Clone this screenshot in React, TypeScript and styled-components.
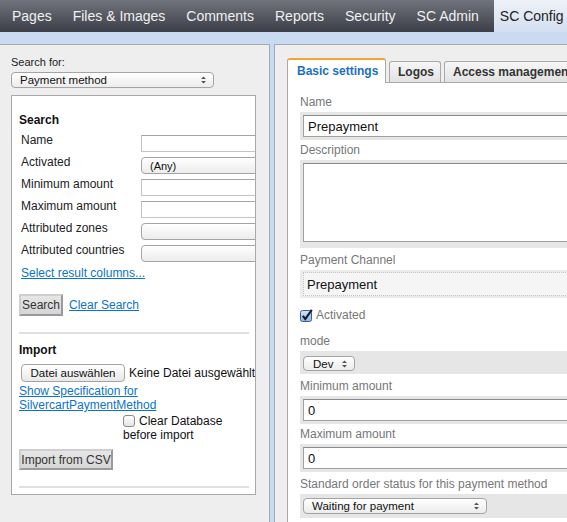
import React from "react";
import styled, { createGlobalStyle } from "styled-components";

const Global = createGlobalStyle`
  html, body { margin: 0; padding: 0; }
  body {
    font-family: "Liberation Sans", Arial, sans-serif;
    background: #c9dbf1;
    color: #222;
  }
  * { box-sizing: border-box; }
`;

const Page = styled.div`
  width: 567px;
  height: 522px;
  overflow: hidden;
  display: flex;
  flex-direction: column;
  background: #c9dbf1;
`;

const TopNav = styled.nav`
  height: 32px;
  flex: none;
  display: flex;
  align-items: stretch;
  gap: 9px;
  padding-left: 6px;
  background: linear-gradient(#72747d, #3b3e47);
`;

const NavTab = styled.div<{ $active?: boolean }>`
  display: flex;
  align-items: center;
  padding: 0 6px 1px;
  font-size: 14px;
  white-space: nowrap;
  color: ${(p) => (p.$active ? "#222" : "#f0f0f0")};
  background: ${(p) =>
    p.$active ? "linear-gradient(#eef2f7, #d2dff0)" : "transparent"};
`;

const Workspace = styled.div`
  flex: 1;
  min-height: 0;
  display: flex;
  gap: 4px;
  padding-top: 12px;
`;

const LeftPanel = styled.aside`
  width: 270px;
  flex: none;
  background: #eeeeee;
  border-top: 1px solid #a9a9a9;
  border-right: 1px solid #9fa8b4;
  padding: 11px 0 0 11px;
`;

const SmallLabel = styled.div`
  font-size: 11px;
  line-height: 13px;
  color: #222;
`;

const MacSelect = styled.div<{ $w: number; $h?: number; $pl?: number }>`
  width: ${(p) => p.$w}px;
  height: ${(p) => p.$h ?? 16}px;
  flex: none;
  display: flex;
  align-items: center;
  justify-content: space-between;
  padding: 0 7px 0 ${(p) => p.$pl ?? 8}px;
  border: 1px solid #a4a4a4;
  border-radius: 4px;
  background: linear-gradient(#ffffff, #ececec);
  font-size: 11.5px;
  color: #111;
  white-space: nowrap;
  overflow: hidden;
`;

const SearchFor = styled(MacSelect)`
  margin-top: 3px;
`;

const Box = styled.section`
  margin-top: 7px;
  width: 245px;
  background: #fff;
  border: 1px solid #a9a9a9;
  padding: 17px 6px 6px 7px;
  overflow: hidden;
`;

const BoxHeading = styled.h3<{ $mt?: number }>`
  margin: ${(p) => p.$mt ?? 0}px 0 4px;
  font-size: 12px;
  line-height: 14px;
  font-weight: bold;
  color: #111;
`;

const FieldRow = styled.div`
  display: flex;
  align-items: flex-start;
  height: 22px;
`;

const RowLabel = styled.label`
  width: 122px;
  flex: none;
  padding-left: 2px;
  font-size: 12px;
  line-height: 18px;
  color: #222;
`;

const TextInput = styled.div`
  width: 150px;
  height: 17px;
  flex: none;
  margin-top: 4px;
  border: 1px solid #c4c4c4;
  border-top-color: #a4a4a4;
  background: #fff;
`;

const RowSelect = styled(MacSelect)`
  margin-top: 4px;
  height: 17px;
  width: 150px;
  font-size: 11px;
  justify-content: flex-start;
`;

const Link = styled.a<{ $block?: boolean; $ml?: number }>`
  display: ${(p) => (p.$block ? "block" : "inline")};
  margin-left: ${(p) => p.$ml ?? 0}px;
  font-size: 12px;
  line-height: 14px;
  color: #0a74c9;
  text-decoration: underline;
  cursor: pointer;
`;

const ResultLink = styled(Link)`
  margin-top: 3px;
`;

const SpecLink = styled(Link)`
  margin-top: 2px;
`;

const ActionRow = styled.div<{ $mt: number }>`
  display: flex;
  align-items: center;
  gap: 6px;
  margin-top: ${(p) => p.$mt}px;
`;

const PlainButton = styled.button<{ $w: number; $h: number }>`
  width: ${(p) => p.$w}px;
  height: ${(p) => p.$h}px;
  padding: 0;
  font-family: inherit;
  font-size: 12px;
  color: #333;
  background: linear-gradient(#e6e6e6, #d6d6d6);
  border: 2px solid;
  border-color: #cfcfcf #9a9a9a #9a9a9a #cfcfcf;
  border-radius: 0;
`;

const Divider = styled.hr<{ $mt: number }>`
  margin: ${(p) => p.$mt}px 0 0;
  height: 2px;
  border: none;
  background: #e0e0e0;
`;

const FileRow = styled.div`
  display: flex;
  align-items: center;
  gap: 4px;
  margin-top: 7px;
  margin-left: 2px;
  white-space: nowrap;
`;

const FileButton = styled.button`
  width: 104px;
  height: 18px;
  flex: none;
  padding: 0;
  font-family: inherit;
  font-size: 11.5px;
  color: #111;
  border: 1px solid #a4a4a4;
  border-radius: 4px;
  background: linear-gradient(#ffffff, #e8e8e8);
`;

const FileText = styled.span`
  font-size: 12px;
  color: #111;
`;

const CheckField = styled.label`
  display: block;
  width: 118px;
  margin: 2px 0 0 104px;
  font-size: 12px;
  line-height: 14px;
  color: #111;
`;

const CheckMark = styled.span`
  display: inline-block;
  vertical-align: -2px;
  margin-right: 4px;
  line-height: 0;
`;

const RightPanel = styled.main`
  flex: 1;
  min-width: 0;
  overflow: hidden;
  background: #eeeeee;
  border-top: 1px solid #a9a9a9;
  border-left: 1px solid #9fa8b4;
  padding: 13px 0 0 12px;
`;

const TabBar = styled.div`
  display: flex;
  align-items: flex-end;
  gap: 3px;
  height: 24px;
  width: 400px;
`;

const Tab = styled.div<{ $active?: boolean; $w?: number }>`
  position: relative;
  z-index: ${(p) => (p.$active ? 1 : 0)};
  flex: none;
  display: flex;
  align-items: center;
  height: ${(p) => (p.$active ? 25 : 21)}px;
  margin-bottom: ${(p) => (p.$active ? -1 : 0)}px;
  padding: ${(p) => (p.$active ? "0 0 1px 9px" : "0 0 0 8px")};
  ${(p) => (p.$w ? `width: ${p.$w}px;` : "padding-right: 8px;")}
  font-size: 12px;
  font-weight: bold;
  white-space: nowrap;
  color: ${(p) => (p.$active ? "#1b6fc2" : "#333")};
  background: ${(p) =>
    p.$active ? "#fff" : "linear-gradient(#f6f6f6, #e2e2e2)"};
  border: 1px solid #a9a9a9;
  border-bottom: none;
  border-top: ${(p) => (p.$active ? "2px solid #f2a532" : "1px solid #a9a9a9")};
  border-radius: 3px 3px 0 0;
`;

const Content = styled.div`
  width: 400px;
  height: 500px;
  background: #fff;
  border-top: 1px solid #a9a9a9;
  border-left: 1px solid #a9a9a9;
  padding: 12px 0 0 12px;
`;

const FieldLabel = styled.div<{ $mt?: number }>`
  margin-top: ${(p) => p.$mt ?? 0}px;
  font-size: 12px;
  line-height: 14px;
  color: #777;
`;

const Strip = styled.div<{ $pt?: number; $pb?: number }>`
  margin-top: 3px;
  padding: ${(p) => p.$pt ?? 3}px 3px ${(p) => p.$pb ?? 3}px;
  background: #e6e6e6;
`;

const FormInput = styled.div<{ $h?: number }>`
  height: ${(p) => p.$h ?? 22}px;
  display: flex;
  align-items: center;
  padding-left: 4px;
  background: #fff;
  border: 1px solid #a0a0a0;
  border-top-color: #8a8a8a;
  font-size: 13px;
  color: #111;
`;

const ReadonlyStrip = styled.div`
  margin-top: 3px;
  padding: 2px 3px;
  background: #ececec;
`;

const ReadonlyValue = styled.div`
  height: 24px;
  display: flex;
  align-items: center;
  padding-left: 3px;
  background: #f5f5f5;
  border: 1px dotted #c2c2c2;
  font-size: 13px;
  color: #111;
`;

const CheckRow = styled.div`
  display: flex;
  align-items: center;
  gap: 3px;
  height: 18px;
  margin-top: 8px;
  font-size: 12px;
  color: #777;
`;

const Arrows = () => (
  <svg width="5" height="8" viewBox="0 0 5 8">
    <path d="M0 3 L2.5 0.5 L5 3 Z M0 5 L2.5 7.5 L5 5 Z" fill="#555" />
  </svg>
);

const EmptyBox = () => (
  <svg width="12" height="12" viewBox="0 0 12 12">
    <defs>
      <linearGradient id="eb" x1="0" y1="0" x2="0" y2="1">
        <stop offset="0" stopColor="#ffffff" />
        <stop offset="1" stopColor="#e4e4e4" />
      </linearGradient>
    </defs>
    <rect x="0.5" y="0.5" width="11" height="11" rx="2.5" fill="url(#eb)" stroke="#8a8a8a" />
  </svg>
);

const CheckedBox = () => (
  <svg width="13" height="13" viewBox="0 0 13 13">
    <defs>
      <linearGradient id="cb" x1="0" y1="0" x2="0" y2="1">
        <stop offset="0" stopColor="#d7e6f7" />
        <stop offset="1" stopColor="#8fb4e3" />
      </linearGradient>
    </defs>
    <rect x="0.5" y="1.5" width="11" height="11" rx="2" fill="url(#cb)" stroke="#3d5c8c" />
    <path d="M2.8 6.8 L5.3 10 L11.8 0.8" fill="none" stroke="#151a2a" strokeWidth="2.1" />
  </svg>
);

const navItems = ["Pages", "Files & Images", "Comments", "Reports", "Security", "SC Admin"];

const searchRows: { label: string; kind: "text" | "select"; value?: string }[] = [
  { label: "Name", kind: "text" },
  { label: "Activated", kind: "select", value: "(Any)" },
  { label: "Minimum amount", kind: "text" },
  { label: "Maximum amount", kind: "text" },
  { label: "Attributed zones", kind: "select" },
  { label: "Attributed countries", kind: "select" },
];

export default function App() {
  return (
    <Page>
      <Global />
      <TopNav>
        {navItems.map((n) => (
          <NavTab key={n}>{n}</NavTab>
        ))}
        <NavTab $active>SC Config</NavTab>
      </TopNav>
      <Workspace>
        <LeftPanel>
          <SmallLabel>Search for:</SmallLabel>
          <SearchFor $w={203}>
            <span>Payment method</span>
            <Arrows />
          </SearchFor>
          <Box>
            <BoxHeading>Search</BoxHeading>
            {searchRows.map((r) => (
              <FieldRow key={r.label}>
                <RowLabel>{r.label}</RowLabel>
                {r.kind === "text" ? (
                  <TextInput />
                ) : (
                  <RowSelect $w={150}>{r.value ?? ""}</RowSelect>
                )}
              </FieldRow>
            ))}
            <ResultLink $block $ml={2}>Select result columns...</ResultLink>
            <ActionRow $mt={14}>
              <PlainButton $w={44} $h={22}>Search</PlainButton>
              <Link>Clear Search</Link>
            </ActionRow>
            <Divider $mt={16} />
            <BoxHeading $mt={9}>Import</BoxHeading>
            <FileRow>
              <FileButton>Datei auswählen</FileButton>
              <FileText>Keine Datei ausgewählt</FileText>
            </FileRow>
            <SpecLink $block>Show Specification for SilvercartPaymentMethod</SpecLink>
            <CheckField>
              <CheckMark>
                <EmptyBox />
              </CheckMark>
              Clear Database before import
            </CheckField>
            <ActionRow $mt={7}>
              <PlainButton $w={94} $h={21}>Import from CSV</PlainButton>
            </ActionRow>
            <Divider $mt={16} />
          </Box>
        </LeftPanel>
        <RightPanel>
          <TabBar>
            <Tab $active $w={99}>Basic settings</Tab>
            <Tab $w={52}>Logos</Tab>
            <Tab>Access management</Tab>
          </TabBar>
          <Content>
            <FieldLabel>Name</FieldLabel>
            <Strip>
              <FormInput>Prepayment</FormInput>
            </Strip>
            <FieldLabel $mt={3}>Description</FieldLabel>
            <Strip $pb={6}>
              <FormInput $h={79} />
            </Strip>
            <FieldLabel $mt={5}>Payment Channel</FieldLabel>
            <ReadonlyStrip>
              <ReadonlyValue>Prepayment</ReadonlyValue>
            </ReadonlyStrip>
            <CheckRow>
              <CheckedBox />
              <span>Activated</span>
            </CheckRow>
            <FieldLabel $mt={10}>mode</FieldLabel>
            <Strip $pt={5}>
              <MacSelect $w={52} $h={15} $pl={9}>
                <span>Dev</span>
                <Arrows />
              </MacSelect>
            </Strip>
            <FieldLabel $mt={5}>Minimum amount</FieldLabel>
            <Strip>
              <FormInput>0</FormInput>
            </Strip>
            <FieldLabel $mt={3}>Maximum amount</FieldLabel>
            <Strip>
              <FormInput>0</FormInput>
            </Strip>
            <FieldLabel $mt={5}>Standard order status for this payment method</FieldLabel>
            <Strip $pt={4} $pb={4}>
              <MacSelect $w={184} $pl={8}>
                <span>Waiting for payment</span>
                <Arrows />
              </MacSelect>
            </Strip>
          </Content>
        </RightPanel>
      </Workspace>
    </Page>
  );
}
